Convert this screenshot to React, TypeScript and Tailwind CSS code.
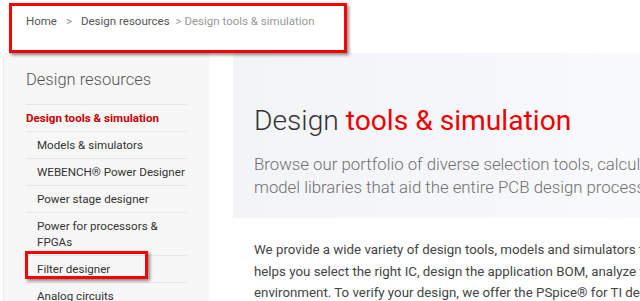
import React from 'react';

const navItems = [
  { label: 'Design tools & simulation', active: true, sub: false },
  { label: 'Models & simulators', sub: true },
  { label: 'WEBENCH® Power Designer', sub: true },
  { label: 'Power stage designer', sub: true },
  { label: 'Power for processors & FPGAs', sub: true },
  { label: 'Filter designer', sub: true },
  { label: 'Analog circuits', sub: true },
];

const App: React.FC = () => {
  return (
    <div className="relative w-[640px] h-[301px] overflow-hidden bg-white font-['Roboto','Liberation_Sans',sans-serif]">
      {/* Breadcrumb */}
      <div className="h-[53px] pl-[26px] pt-[14px] text-[11.5px] leading-[14px]">
        <span className="text-[#555]">Home</span>
        <span className="text-[#888] mx-[9px]">&gt;</span>
        <span className="text-[#555]">Design resources</span>
        <span className="text-[#999] ml-[6px]">&gt; Design tools &amp; simulation</span>
      </div>

      <div className="flex">
        {/* Sidebar */}
        <aside className="ml-[3px] w-[206px] shrink-0 h-[260px] bg-[#f7f7f7] border-l border-t border-[#ececec] px-[22px]">
          <h2 className="pt-[14px] mb-[12px] text-[16.5px] leading-[24px] font-light text-[#555]">Design resources</h2>
          <ul className="w-[161px]">
            {navItems.map((item) => (
              <li
                key={item.label}
                className={`border-t border-[#e6e6e6] py-[5px] text-[11.6px] leading-[16px] ${
                  item.active ? 'text-[#cc0000] font-bold' : 'text-[#333]'
                } ${item.sub ? 'pl-[11px]' : ''}`}
              >
                {item.label}
              </li>
            ))}
          </ul>
        </aside>

        {/* Main */}
        <main className="ml-[24px] w-[520px] shrink-0">
          <section className="h-[165px] pl-[21px] pt-[50px] bg-gradient-to-r from-[#f3f4f7] via-[#f6f7fa] to-[#fbfcfd]">
            <h1 className="text-[28.2px] leading-[36px] font-light text-[#333] whitespace-nowrap">
              Design <span className="text-[#ee0000] font-normal">tools &amp; simulation</span>
            </h1>
            <p className="mt-[14px] text-[16.8px] leading-[23px] font-light text-[#707070] whitespace-nowrap">
              Browse our portfolio of diverse selection tools, calculators, reference designs and
              <br />
              model libraries that aid the entire PCB design process.
            </p>
          </section>
          <p className="mt-[21px] pl-[21px] text-[13.3px] leading-[21.5px] text-[#444] whitespace-nowrap">
            We provide a wide variety of design tools, models and simulators to help you through the design process.
            <br />
            helps you select the right IC, design the application BOM, analyze your system in a simulated
            <br />
            environment. To verify your design, we offer the PSpice® for TI design and simulation tool.
          </p>
        </main>
      </div>

      {/* Annotation boxes */}
      <div className="absolute left-[9px] top-[3px] w-[338px] h-[50px] border-[3px] border-[#ff0000] shadow-[2px_2px_3px_rgba(0,0,0,0.45)] pointer-events-none" />
      <div className="absolute left-[25px] top-[251px] w-[123px] h-[28px] border-[3px] border-[#ff0000] shadow-[2px_2px_3px_rgba(0,0,0,0.45)] pointer-events-none" />
    </div>
  );
};

export default App;
